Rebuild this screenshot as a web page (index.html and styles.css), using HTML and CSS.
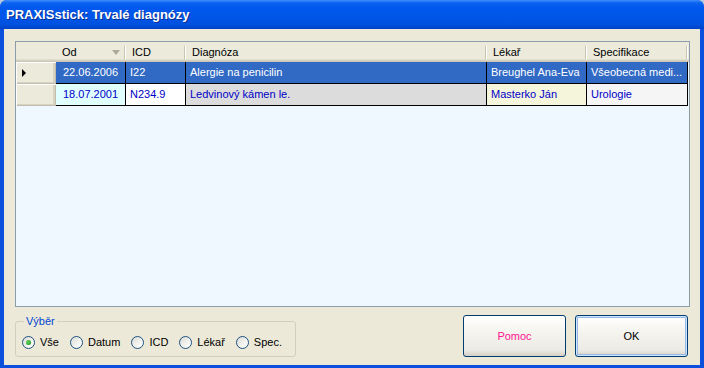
FILE: index.html
```html
<!DOCTYPE html>
<html lang="cs">

<head>
    <meta charset="UTF-8">
    <title>PRAXISstick: Trvalé diagnózy</title>
    <link rel="stylesheet" href="styles.css">
</head>

<body>
    <div class="window">
        <div class="titlebar">PRAXISstick: Trvalé diagnózy</div>
        <div class="client">
            <div class="grid">
                <div class="row head">
                    <div class="cell rh"></div>
                    <div class="cell">Od <span class="sort"></span></div>
                    <div class="cell">ICD</div>
                    <div class="cell">Diagnóza</div>
                    <div class="cell">Lékař</div>
                    <div class="cell">Specifikace</div>
                </div>
                <div class="row selected">
                    <div class="cell rh"><span class="current"></span></div>
                    <div class="cell date">22.06.2006</div>
                    <div class="cell">I22</div>
                    <div class="cell">Alergie na penicilin</div>
                    <div class="cell">Breughel Ana-Eva</div>
                    <div class="cell">Všeobecná medi...</div>
                </div>
                <div class="row">
                    <div class="cell rh"></div>
                    <div class="cell date c-od">18.07.2001</div>
                    <div class="cell c-icd">N234.9</div>
                    <div class="cell c-diag">Ledvinový kámen le.</div>
                    <div class="cell c-lek">Masterko Ján</div>
                    <div class="cell c-spec">Urologie</div>
                </div>
            </div>

            <div class="bottom">
                <fieldset class="group">
                    <legend>Výběr</legend>
                    <label class="opt"><span class="radio checked"></span>Vše</label>
                    <label class="opt"><span class="radio"></span>Datum</label>
                    <label class="opt"><span class="radio"></span>ICD</label>
                    <label class="opt"><span class="radio"></span>Lékař</label>
                    <label class="opt"><span class="radio"></span>Spec.</label>
                </fieldset>
                <div class="buttons">
                    <button class="btn help">Pomoc</button>
                    <button class="btn ok">OK</button>
                </div>
            </div>
        </div>
    </div>
</body>

</html>
```

FILE: styles.css
```css
body {
    margin: 0;
    font-family: "Liberation Sans", Arial, sans-serif;
    font-size: 11px;
    background-color: #b8c8e0;
}

.window {
    width: 704px;
    height: 368px;
    display: flex;
    flex-direction: column;
    background: #0a50dc;
    border-radius: 7px 7px 0 0;
    overflow: hidden;
}

.titlebar {
    height: 29px;
    flex: none;
    box-sizing: border-box;
    padding: 0 6px;
    line-height: 30px;
    color: #fff;
    font-size: 13px;
    font-weight: bold;
    text-shadow: 1px 1px #0b2f93;
    background: linear-gradient(to bottom, #3d8ffd 0%, #0c63f0 10%, #0058ee 25%, #0056e8 60%, #0050de 85%, #0042c6 100%);
}

.client {
    flex: 1;
    margin: 0 4px 3px 4px;
    padding: 12px 10px 0 11px;
    background: #ece9d8;
    display: flex;
    flex-direction: column;
}

/* data grid */

.grid {
    height: 266px;
    box-sizing: border-box;
    border: 1px solid #8b9cac;
    background: #f0f8ff;
}

.row {
    display: grid;
    grid-template-columns: 40px 70px 60px 301px 100px 101px;
    height: 22px;
}

.cell {
    box-sizing: border-box;
    padding: 0 4px;
    line-height: 21px;
    white-space: nowrap;
    overflow: hidden;
    border-right: 1px solid #000;
    border-bottom: 1px solid #000;
}

.cell.rh {
    border: none;
    background: #ebeadb;
    box-shadow: inset 1px 1px #fff, inset -1px -1px #c1bdaa, inset -3px -2px #d8d4c4;
    position: relative;
}

.current {
    position: absolute;
    left: 6px;
    top: 7px;
    border-left: 4px solid #000;
    border-top: 4px solid transparent;
    border-bottom: 4px solid transparent;
}

.date {
    text-align: center;
}

.row.head {
    height: 20px;
    background: #ebeadb;
    box-shadow: inset 0 -1px #cbc7b8, inset 0 -2px #d6d2c2, inset 0 -3px #e2decd;
}

.row.head .cell {
    border: none;
    padding-left: 6px;
    line-height: 20px;
    position: relative;
}

.row.head .cell:not(.rh)::after {
    content: "";
    position: absolute;
    right: 1px;
    top: 4px;
    height: 13px;
    width: 1px;
    background: #c7c5b2;
    box-shadow: 1px 0 #fff;
}

.row.head .cell.rh {
    box-shadow: none;
    background: transparent;
}

.sort {
    position: absolute;
    left: 56px;
    top: 8px;
    border-top: 5px solid #aca899;
    border-left: 4px solid transparent;
    border-right: 4px solid transparent;
}

.row.selected .cell:not(.rh) {
    background: #316ac5;
    color: #fff;
}

.c-od { background: #e0ffff; color: #0000c8; }
.c-icd { background: #fff; color: #0000c8; }
.c-diag { background: #dcdcdc; color: #0000c8; }
.c-lek { background: #f5f5dc; color: #0000c8; }
.c-spec { background: #f5f5f5; color: #0000c8; }

/* bottom part */

.bottom {
    display: flex;
    align-items: flex-start;
    margin-top: 8px;
}

.group {
    width: 281px;
    height: 42px;
    box-sizing: border-box;
    margin: 0;
    padding: 0 6px 0 6px;
    border: 1px solid #d0d0bf;
    border-radius: 3px;
    display: flex;
    align-items: center;
    gap: 11px;
}

.group legend {
    color: #0046d5;
    padding: 0 2px;
    margin-left: 2px;
    line-height: 12px;
}

.opt {
    display: flex;
    align-items: center;
    gap: 5px;
    margin-top: 1px;
}

.radio {
    width: 13px;
    height: 13px;
    box-sizing: border-box;
    border: 1px solid #1c5180;
    border-radius: 50%;
    background: linear-gradient(135deg, #dcdcd5 0%, #f2f2ee 55%, #fff 100%);
    display: flex;
    align-items: center;
    justify-content: center;
}

.radio.checked::before {
    content: "";
    width: 5px;
    height: 5px;
    border-radius: 50%;
    background: radial-gradient(circle at 40% 40%, #6fd56f, #21a121 70%);
}

.buttons {
    margin-left: auto;
    margin-right: 2px;
    display: flex;
    gap: 9px;
}

.btn {
    height: 42px;
    font-family: "Liberation Sans", Arial, sans-serif;
    font-size: 11px;
    border: 1px solid #003c74;
    border-radius: 3px;
    background: linear-gradient(to bottom, #ffffff 0%, #f5f4ef 40%, #ecebe5 85%, #d6d0c5 100%);
    color: #000;
    padding: 0;
}

.btn.help {
    width: 103px;
    color: #ff1493;
}

.btn.ok {
    width: 113px;
    box-shadow: inset 0 0 0 1px #cee7ff, inset 0 0 0 2px #98b8ea;
}
```
